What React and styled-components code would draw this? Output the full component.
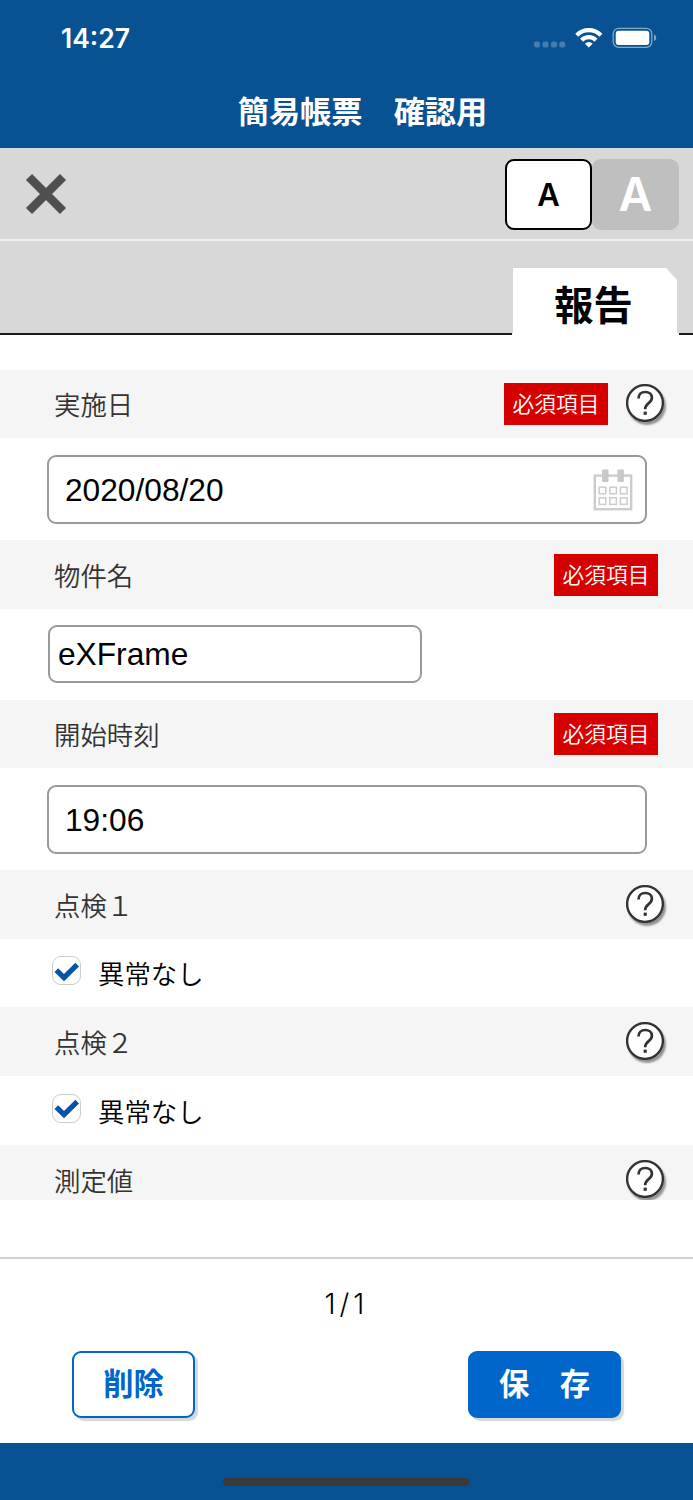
import React, { useState } from "react";
import styled, { createGlobalStyle } from "styled-components";

const GlobalStyle = createGlobalStyle`
  * {
    box-sizing: border-box;
  }

  body {
    margin: 0;
    background: #fff;
    font-family: "Noto Sans CJK JP", sans-serif;
    color: #000;
  }

  button,
  input {
    margin: 0;
    padding: 0;
    border: none;
    outline: none;
    font-family: inherit;
  }
`;

const StatusIcons = () => (
  <svg width="124" height="24" viewBox="0 0 124 24">
    <g fill="#fff" fillOpacity="0.25">
      <rect x="1" y="15.500" width="6" height="6" rx="2" />
      <rect x="9.500" y="15.500" width="6" height="6" rx="2" />
      <rect x="18" y="15.500" width="6" height="6" rx="2" />
      <rect x="26.300" y="15.500" width="6" height="6" rx="2" />
    </g>
    <g fill="none" stroke="#fff" strokeWidth="4.200">
      <path d="M43.700 9.200a17.200 17.200 0 0 1 24.200 0" />
      <path d="M48.600 14.200a10.200 10.200 0 0 1 14.400 0" />
    </g>
    <path d="M55.800 21.600l-3.900-3.900a5.600 5.600 0 0 1 7.800 0z" fill="#fff" />
    <rect
      x="80.200"
      y="2.300"
      width="38.600"
      height="19"
      rx="5.500"
      fill="none"
      stroke="#fff"
      strokeOpacity="0.5"
      strokeWidth="1.300"
    />
    <rect x="82.700" y="4.800" width="33.600" height="14.200" rx="3" fill="#fff" />
    <path d="M121 8.600v6.400c1.400-.6 2.200-1.800 2.200-3.200s-.8-2.600-2.200-3.200z" fill="#fff" fillOpacity="0.5" />
  </svg>
);

const CloseIcon = () => (
  <svg width="42" height="42" viewBox="0 0 42 42">
    <path
      d="M4 4L38 38M38 4L4 38"
      stroke="#4f4f4f"
      strokeWidth="8.600"
    />
  </svg>
);

const CalendarIcon = () => (
  <svg width="40" height="42" viewBox="0 0 40 42" fill="none">
    <rect x="1.800" y="6.600" width="36.400" height="33.600" stroke="#ccc" strokeWidth="2.400" />
    <rect x="9" y="0.500" width="6.500" height="12.500" rx="1" fill="#c8c8c8" />
    <rect x="24.400" y="0.500" width="6.500" height="12.500" rx="1" fill="#c8c8c8" />
    <g stroke="#ccc" strokeWidth="1.500">
      <rect x="6.200" y="18.200" width="6.600" height="6.600" />
      <rect x="16.800" y="18.200" width="6.600" height="6.600" />
      <rect x="27.400" y="18.200" width="6.600" height="6.600" />
      <rect x="6.200" y="28.800" width="6.600" height="6.600" />
      <rect x="16.800" y="28.800" width="6.600" height="6.600" />
      <rect x="27.400" y="28.800" width="6.600" height="6.600" />
    </g>
  </svg>
);

const QuestionIcon = () => (
  <svg width="38" height="38" viewBox="0 0 38 38" fill="none" stroke="#333">
    <circle cx="19" cy="19" r="17.900" fill="#fff" strokeWidth="2.400" />
    <path
      d="M12.500 14.600c0-4.200 2.800-6.600 6.700-6.600 3.900 0 6.700 2.300 6.700 5.800 0 2.600-1.500 4-3.500 5.600-2.200 1.700-3.200 2.900-3.200 5.900"
      strokeWidth="2.700"
    />
    <rect x="17.600" y="27.600" width="3.200" height="3.200" fill="#333" stroke="none" />
  </svg>
);

const CheckIcon = () => (
  <svg width="26" height="26" viewBox="0 0 26 26">
    <path d="M2.300 12.200l7.700 7.400L23.200 6.600" fill="none" stroke="#0453a8" strokeWidth="5.200" />
  </svg>
);

const fields = [
  { label: "実施日", height: 68, required: true, help: true, type: "date", value: "2020/08/20", body: 102 },
  { label: "物件名", height: 69, required: true, type: "text", value: "eXFrame", body: 90.5 },
  { label: "開始時刻", height: 68.5, required: true, type: "time", value: "19:06", body: 102 },
  { label: "点検１", height: 69, help: true, type: "check", value: "異常なし", body: 68 },
  { label: "点検２", height: 69, help: true, type: "check", value: "異常なし", body: 69 },
  { label: "測定値", height: 69, help: true },
];

function Field({ field }) {
  const [value, setValue] = useState(field.value);
  const [checked, setChecked] = useState(true);

  return (
    <>
      <FieldHeader $height={field.height}>
        <FieldLabel>{field.label}</FieldLabel>
        {field.required && <Required $last={!field.help}>必須項目</Required>}
        {field.help && (
          <HelpButton aria-label="help">
            <QuestionIcon />
          </HelpButton>
        )}
      </FieldHeader>
      {field.type && (
        <FieldBody $height={field.body}>
          {field.type === "check" ? (
            <CheckLabel>
              <CheckBox onClick={() => setChecked(!checked)}>{checked && <CheckIcon />}</CheckBox>
              <span>{field.value}</span>
            </CheckLabel>
          ) : (
            <InputBox $small={field.type === "text"}>
              <Input value={value} onChange={(e) => setValue(e.target.value)} />
              {field.type === "date" && <CalendarIcon />}
            </InputBox>
          )}
        </FieldBody>
      )}
    </>
  );
}

function App() {
  const [size, setSize] = useState("small");

  return (
    <Screen>
      <GlobalStyle />
      <Header>
        <StatusBar>
          <Time>14:27</Time>
          <StatusIcons />
        </StatusBar>
        <Title>簡易帳票　確認用</Title>
      </Header>
      <Toolbar>
        <CloseButton aria-label="close">
          <CloseIcon />
        </CloseButton>
        <SizeSwitch>
          <SizeButton $active={size === "small"} $font={31} onClick={() => setSize("small")}>
            A
          </SizeButton>
          <SizeButton $active={size === "large"} $font={46.5} onClick={() => setSize("large")}>
            A
          </SizeButton>
        </SizeSwitch>
      </Toolbar>
      <Tabs>
        <TabLine />
        <Tab>
          <TabShape>報告</TabShape>
        </Tab>
        <TabEnd />
      </Tabs>
      <Form>
        {fields.map((field, index) => (
          <Field key={index} field={field} />
        ))}
      </Form>
      <Footer>
        <PageCount>1/1</PageCount>
        <Actions>
          <ActionButton $width={123}>削除</ActionButton>
          <ActionButton $primary $width={153}>
            保　存
          </ActionButton>
        </Actions>
      </Footer>
      <HomeBar>
        <HomeIndicator />
      </HomeBar>
    </Screen>
  );
}

export default App;

const Screen = styled.div`
  display: flex;
  flex-direction: column;
  width: 693px;
  height: 1500px;
  overflow: hidden;
  background: #fff;
`;

const Header = styled.header`
  flex: none;
  height: 147.5px;
  background: #085293;
  color: #fff;
`;

const StatusBar = styled.div`
  display: flex;
  align-items: center;
  justify-content: space-between;
  height: 76px;
  padding: 0 36px 0 61px;
`;

const Time = styled.div`
  font-family: Inter, sans-serif;
  font-size: 26.5px;
  font-weight: 600;
`;

const Title = styled.h1`
  margin: 0;
  padding-left: 32px;
  font-size: 31.2px;
  font-weight: 700;
  line-height: 67px;
  text-align: center;
  white-space: nowrap;
`;

const Toolbar = styled.div`
  display: flex;
  flex: none;
  align-items: center;
  justify-content: space-between;
  height: 93.5px;
  padding: 2px 14px 0 25px;
  background: #d8d8d8;
  border-bottom: 2px solid #f0f0f0;
`;

const CloseButton = styled.button`
  display: flex;
  background: none;
`;

const SizeSwitch = styled.div`
  display: flex;
`;

const SizeButton = styled.button`
  width: 87px;
  height: 71px;
  border: 2px solid ${(props) => (props.$active ? "#000" : "#bfbfbf")};
  border-radius: 9px;
  background: ${(props) => (props.$active ? "#fff" : "#bfbfbf")};
  color: ${(props) => (props.$active ? "#000" : "#fff")};
  font-family: Inter, sans-serif;
  font-size: ${(props) => props.$font}px;
  font-weight: 600;
  line-height: 1;
`;

const Tabs = styled.div`
  display: flex;
  flex: none;
  align-items: stretch;
  height: 94px;
  background: #d8d8d8;
`;

const TabLine = styled.div`
  flex: 1;
  border-bottom: 2px solid #1b1b1b;
`;

const Tab = styled.div`
  display: flex;
  align-items: flex-end;
  width: 167px;
  padding: 0 2px 0 1px;
  border-bottom: 2px solid #fff;
`;

const TabShape = styled.div`
  width: 164px;
  height: 65px;
  padding-right: 3px;
  background: #fff;
  clip-path: polygon(0 0, 153px 0, 100% 12px, 100% 100%, 0 100%);
  font-size: 39.3px;
  font-weight: 700;
  line-height: 70px;
  text-align: center;
`;

const TabEnd = styled.div`
  width: 14px;
  border-bottom: 2px solid #1b1b1b;
`;

const Form = styled.main`
  flex: none;
  height: 865px;
  padding-top: 35px;
  overflow: hidden;
`;

const FieldHeader = styled.div`
  display: flex;
  align-items: center;
  height: ${(props) => props.$height}px;
  padding: 0 29px 0 54px;
  background: #f5f5f5;
`;

const FieldLabel = styled.div`
  flex: 1;
  color: #333;
  font-size: 26.4px;
  font-weight: 350;
  line-height: 68px;
`;

const Required = styled.div`
  width: 104px;
  height: 42px;
  margin-right: ${(props) => (props.$last ? "6px" : "18px")};
  background: #d70000;
  color: #fff;
  font-size: 21.7px;
  font-weight: 350;
  line-height: 39px;
  text-align: center;
`;

const HelpButton = styled.button`
  display: flex;
  margin-bottom: 2px;
  border-radius: 50%;
  background: none;
  box-shadow: 2px 3px 2px rgba(0, 0, 0, 0.4);
`;

const FieldBody = styled.div`
  display: flex;
  align-items: center;
  height: ${(props) => props.$height}px;
  padding-left: 47px;
`;

const InputBox = styled.div`
  display: flex;
  align-items: center;
  width: ${(props) => (props.$small ? 374 : 600)}px;
  height: ${(props) => (props.$small ? 58 : 69)}px;
  margin-left: ${(props) => (props.$small ? 1 : 0)}px;
  padding: ${(props) => (props.$small ? "0 8px" : "2px 12px 0 16px")};
  border: 2px solid #999;
  border-radius: 9px;
  background: #fff;
`;

const Input = styled.input`
  flex: 1;
  min-width: 0;
  background: none;
  font-family: "Liberation Sans", Arial, sans-serif;
  font-size: 31.7px;
`;

const CheckLabel = styled.label`
  display: flex;
  align-items: center;
  gap: 17px;
  padding-left: 5px;
  font-size: 26.4px;
  font-weight: 350;
  line-height: 36px;
`;

const CheckBox = styled.button`
  display: flex;
  align-items: center;
  justify-content: center;
  width: 29px;
  height: 29px;
  margin-bottom: 5px;
  border: 1.500px solid #ccc;
  border-radius: 9px;
  background: #fff;
`;

const Footer = styled.footer`
  flex: none;
  height: 186px;
  margin-top: 57px;
  border-top: 2px solid #d0d0d0;
`;

const PageCount = styled.div`
  padding-top: 27px;
  font-family: Inter, sans-serif;
  font-size: 28px;
  font-weight: 300;
  letter-spacing: 4px;
  line-height: 36px;
  text-align: center;
`;

const Actions = styled.div`
  display: flex;
  justify-content: space-between;
  padding: 29px 72px 0;
`;

const ActionButton = styled.button`
  width: ${(props) => props.$width}px;
  height: 67px;
  padding-bottom: 5px;
  border: 2px solid #0066cb;
  border-radius: 9px;
  background: ${(props) => (props.$primary ? "#0066cb" : "#fff")};
  box-shadow: 3px 3px 1px #d8d8d8;
  color: ${(props) => (props.$primary ? "#fff" : "#0066cb")};
  font-size: 30.3px;
  font-weight: 700;
  line-height: 1;
`;

const HomeBar = styled.div`
  display: flex;
  flex: 1;
  align-items: flex-end;
  justify-content: center;
  padding-bottom: 14px;
  background: #085293;
`;

const HomeIndicator = styled.div`
  width: 247px;
  height: 8px;
  border-radius: 4px;
  background: #3a3a3a;
`;
